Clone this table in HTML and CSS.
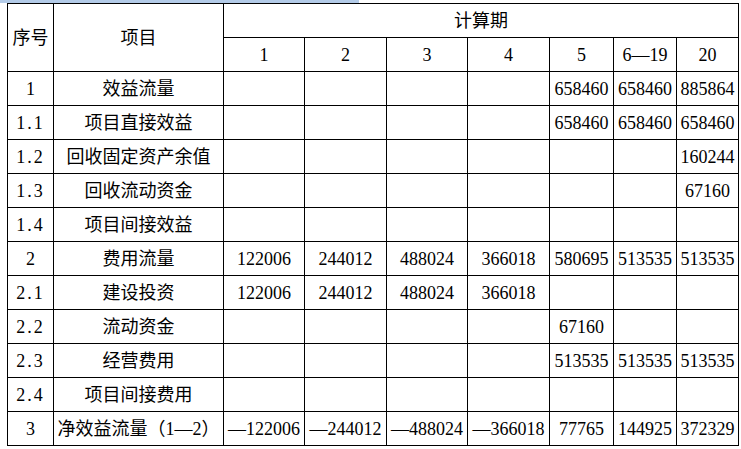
FILE: index.html
```html
<!DOCTYPE html>
<html>
<head>
<meta charset="utf-8">
<link rel="stylesheet" href="styles.css">
</head>
<body>
<div class="topbar"></div>
<div class="wrap">
<table class="grid">
<colgroup>
<col class="c1"><col class="c2"><col class="c3"><col class="c4"><col class="c5"><col class="c6"><col class="c7"><col class="c8"><col class="c9">
</colgroup>
<tr><td rowspan="2">序号</td><td rowspan="2">项目</td><td colspan="7">计算期</td></tr>
<tr><td>1</td><td>2</td><td>3</td><td>4</td><td>5</td><td>6—19</td><td>20</td></tr>
<tr><td>1</td><td>效益流量</td><td></td><td></td><td></td><td></td><td>658460</td><td>658460</td><td>885864</td></tr>
<tr><td class="no">1.1</td><td>项目直接效益</td><td></td><td></td><td></td><td></td><td>658460</td><td>658460</td><td>658460</td></tr>
<tr><td class="no">1.2</td><td>回收固定资产余值</td><td></td><td></td><td></td><td></td><td></td><td></td><td>160244</td></tr>
<tr><td class="no">1.3</td><td>回收流动资金</td><td></td><td></td><td></td><td></td><td></td><td></td><td>67160</td></tr>
<tr><td class="no">1.4</td><td>项目间接效益</td><td></td><td></td><td></td><td></td><td></td><td></td><td></td></tr>
<tr><td>2</td><td>费用流量</td><td>122006</td><td>244012</td><td>488024</td><td>366018</td><td>580695</td><td>513535</td><td>513535</td></tr>
<tr><td class="no">2.1</td><td>建设投资</td><td>122006</td><td>244012</td><td>488024</td><td>366018</td><td></td><td></td><td></td></tr>
<tr><td class="no">2.2</td><td>流动资金</td><td></td><td></td><td></td><td></td><td>67160</td><td></td><td></td></tr>
<tr><td class="no">2.3</td><td>经营费用</td><td></td><td></td><td></td><td></td><td>513535</td><td>513535</td><td>513535</td></tr>
<tr><td class="no">2.4</td><td>项目间接费用</td><td></td><td></td><td></td><td></td><td></td><td></td><td></td></tr>
<tr><td>3</td><td>净效益流量（1—2）</td><td>—122006</td><td>—244012</td><td>—488024</td><td>—366018</td><td>77765</td><td>144925</td><td>372329</td></tr>
</table>
</div>
</body>
</html>
```
FILE: styles.css
```css
html, body {
  margin: 0;
  padding: 0;
  background: #ffffff;
}
.topbar {
  width: 359px;
  height: 3px;
  background: #b3cbe8;
}
.wrap {
  padding-left: 7px;
}
.grid {
  border-collapse: collapse;
  table-layout: fixed;
  width: 732px;
  font-family: "Liberation Serif", "Noto Sans CJK SC", serif;
  font-size: 18px;
  color: #000;
}
.grid td {
  border: 1px solid #000;
  height: 33px;
  padding: 0;
  text-align: center;
  vertical-align: middle;
  white-space: nowrap;
  line-height: 20px;
}
.grid td.no {
  letter-spacing: 2px;
}
.c1 { width: 46px; }
.c2 { width: 170px; }
.c3 { width: 81px; }
.c4 { width: 82px; }
.c5 { width: 81px; }
.c6 { width: 82px; }
.c7 { width: 64px; }
.c8 { width: 63px; }
.c9 { width: 62px; }
```
